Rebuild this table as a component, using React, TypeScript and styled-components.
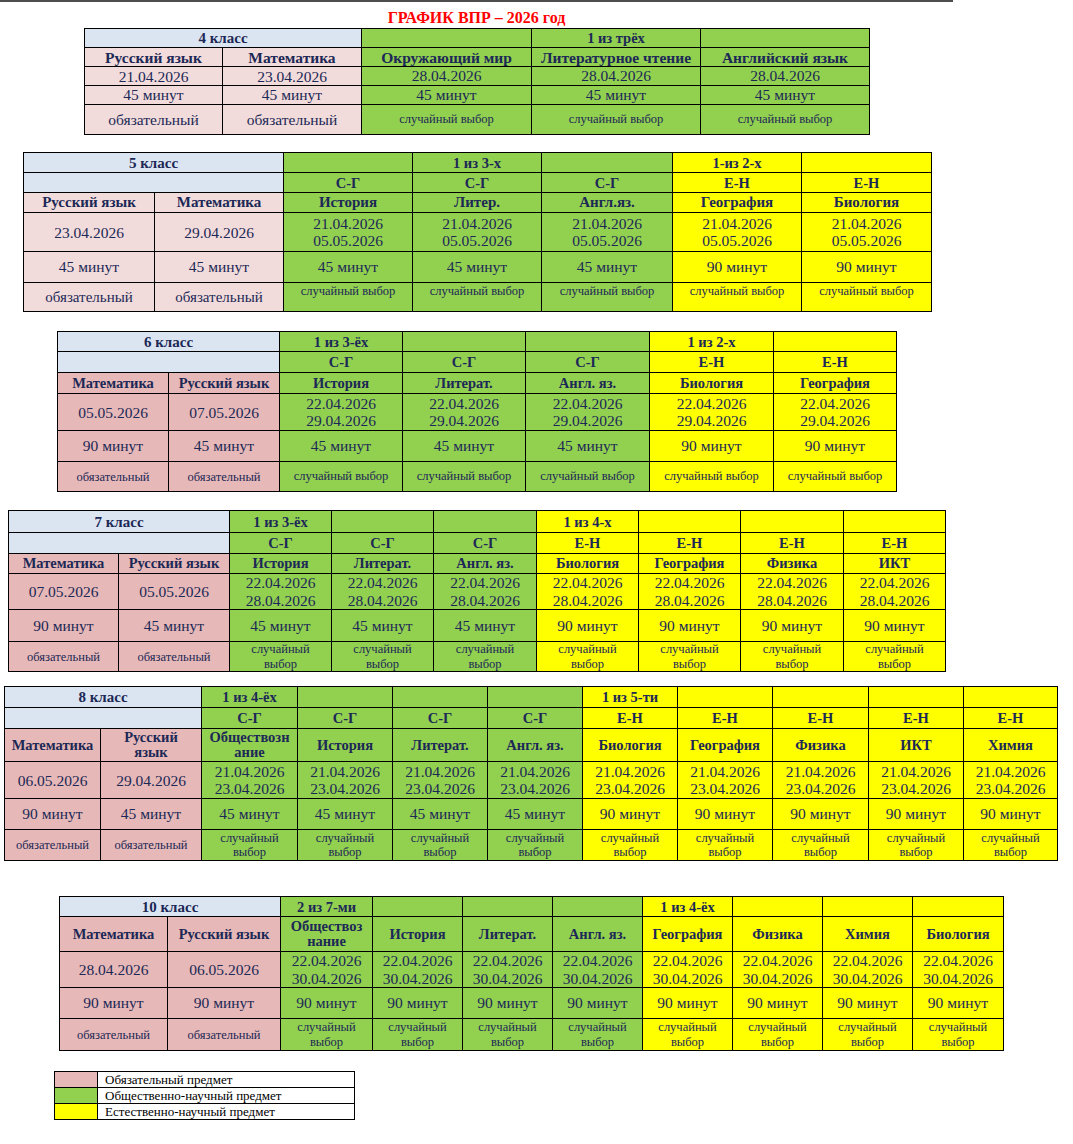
import React from "react";
import styled, { createGlobalStyle } from "styled-components";

const COLORS = {
  blue: "#dbe5f1",
  pinkLight: "#f2dcdb",
  pink: "#e6b8b7",
  green: "#92d050",
  yellow: "#ffff00",
};

type Tone = keyof typeof COLORS;
type Text = string | string[];

type Core = { name: Text; date: string; min: string };
type Elective = {
  group?: string;
  tag?: string;
  name: Text;
  dates: string[];
  min: string;
  tone: "green" | "yellow";
};
type Grade = {
  title: string;
  left: number;
  gap: number;
  cols: number[];
  rows: number[];
  pink: "pinkLight" | "pink";
  core: Core[];
  electives: Elective[];
  withTags: boolean;
  subj: number;
  opt: number;
  choiceTop?: boolean;
  choiceWrap?: boolean;
};

const GlobalStyle = createGlobalStyle`
  body {
    margin: 0;
    background: #fff;
    font-family: "Liberation Serif", "Times New Roman", serif;
  }
`;

const Page = styled.div`
  width: 1073px;
  display: flex;
  flex-direction: column;
  align-items: flex-start;
`;

const TopRule = styled.div`
  width: 953px;
  height: 2px;
  background: #4d4d4d;
`;

const Title = styled.h1`
  width: 953px;
  margin: 0;
  padding-top: 6px;
  height: 20px;
  line-height: 20px;
  text-align: center;
  color: #ff0000;
  font-size: 16px;
  font-weight: 700;
`;

const Sheet = styled.table<{ $left: number; $gap: number }>`
  margin-left: ${(p) => p.$left}px;
  margin-top: ${(p) => p.$gap}px;
  border-collapse: collapse;
  table-layout: fixed;
  color: #1c2856;
`;

const Col = styled.col<{ $w: number }>`
  width: ${(p) => p.$w}px;
`;

const Row = styled.tr<{ $h: number }>`
  height: ${(p) => p.$h}px;
`;

const Cell = styled.td<{
  $tone: Tone;
  $size: number;
  $bold?: boolean;
  $lh?: number;
  $top?: boolean;
}>`
  border: 1px solid #000;
  background: ${(p) => COLORS[p.$tone]};
  padding: ${(p) => (p.$top ? "1px 1px 0" : "0 1px")};
  text-align: center;
  vertical-align: ${(p) => (p.$top ? "top" : "middle")};
  font-size: ${(p) => p.$size}px;
  font-weight: ${(p) => (p.$bold ? 700 : 400)};
  line-height: ${(p) => p.$lh ?? 16}px;
  white-space: nowrap;
  overflow: hidden;
`;

const Legend = styled.table`
  margin: 20px 0 0 54px;
  border-collapse: collapse;
  table-layout: fixed;
  width: 301px;
`;

const Swatch = styled.td<{ $tone: Tone }>`
  width: 42px;
  height: 15px;
  padding: 0;
  border: 1px solid #000;
  background: ${(p) => COLORS[p.$tone]};
`;

const LegendText = styled.td`
  border: 1px solid #000;
  padding: 0 0 0 7px;
  font-size: 13px;
  line-height: 15px;
  color: #000;
`;

const lines = (t: Text) =>
  (Array.isArray(t) ? t : [t]).map((s, i) => (
    <React.Fragment key={i}>
      {i > 0 && <br />}
      {s}
    </React.Fragment>
  ));

const grades: Grade[] = [
  {
    title: "4 класс",
    left: 84,
    gap: 0,
    cols: [138, 139, 170, 169, 169],
    rows: [19, 19, 19, 19, 30],
    pink: "pinkLight",
    withTags: false,
    subj: 15.5,
    opt: 15.5,
    core: [
      { name: "Русский язык", date: "21.04.2026", min: "45 минут" },
      { name: "Математика", date: "23.04.2026", min: "45 минут" },
    ],
    electives: [
      { name: "Окружающий мир", dates: ["28.04.2026"], min: "45 минут", tone: "green" },
      { group: "1 из трёх", name: "Литературное чтение", dates: ["28.04.2026"], min: "45 минут", tone: "green" },
      { name: "Английский язык", dates: ["28.04.2026"], min: "45 минут", tone: "green" },
    ],
  },
  {
    title: "5 класс",
    left: 23,
    gap: 17,
    cols: [131, 129, 129, 129, 131, 129, 130],
    rows: [20, 20, 20, 39, 31, 29],
    pink: "pinkLight",
    withTags: true,
    subj: 15,
    opt: 15,
    choiceTop: true,
    core: [
      { name: "Русский язык", date: "23.04.2026", min: "45 минут" },
      { name: "Математика", date: "29.04.2026", min: "45 минут" },
    ],
    electives: [
      { tag: "С-Г", name: "История", dates: ["21.04.2026", "05.05.2026"], min: "45 минут", tone: "green" },
      { group: "1 из 3-х", tag: "С-Г", name: "Литер.", dates: ["21.04.2026", "05.05.2026"], min: "45 минут", tone: "green" },
      { tag: "С-Г", name: "Англ.яз.", dates: ["21.04.2026", "05.05.2026"], min: "45 минут", tone: "green" },
      { group: "1-из 2-х", tag: "Е-Н", name: "География", dates: ["21.04.2026", "05.05.2026"], min: "90 минут", tone: "yellow" },
      { tag: "Е-Н", name: "Биология", dates: ["21.04.2026", "05.05.2026"], min: "90 минут", tone: "yellow" },
    ],
  },
  {
    title: "6 класс",
    left: 57,
    gap: 19,
    cols: [111, 111, 123, 123, 124, 124, 123],
    rows: [20, 21, 21, 37, 31, 30],
    pink: "pink",
    withTags: true,
    subj: 14.5,
    opt: 12.5,
    core: [
      { name: "Математика", date: "05.05.2026", min: "90 минут" },
      { name: "Русский язык", date: "07.05.2026", min: "45 минут" },
    ],
    electives: [
      { group: "1 из 3-ёх", tag: "С-Г", name: "История", dates: ["22.04.2026", "29.04.2026"], min: "45 минут", tone: "green" },
      { tag: "С-Г", name: "Литерат.", dates: ["22.04.2026", "29.04.2026"], min: "45 минут", tone: "green" },
      { tag: "С-Г", name: "Англ. яз.", dates: ["22.04.2026", "29.04.2026"], min: "45 минут", tone: "green" },
      { group: "1 из 2-х", tag: "Е-Н", name: "Биология", dates: ["22.04.2026", "29.04.2026"], min: "90 минут", tone: "yellow" },
      { tag: "Е-Н", name: "География", dates: ["22.04.2026", "29.04.2026"], min: "90 минут", tone: "yellow" },
    ],
  },
  {
    title: "7 класс",
    left: 8,
    gap: 18,
    cols: [110, 111, 102, 102, 103, 102, 102, 103, 102],
    rows: [22, 21, 20, 36, 32, 30],
    pink: "pink",
    withTags: true,
    subj: 14.5,
    opt: 12.5,
    choiceWrap: true,
    core: [
      { name: "Математика", date: "07.05.2026", min: "90 минут" },
      { name: "Русский язык", date: "05.05.2026", min: "45 минут" },
    ],
    electives: [
      { group: "1 из 3-ёх", tag: "С-Г", name: "История", dates: ["22.04.2026", "28.04.2026"], min: "45 минут", tone: "green" },
      { tag: "С-Г", name: "Литерат.", dates: ["22.04.2026", "28.04.2026"], min: "45 минут", tone: "green" },
      { tag: "С-Г", name: "Англ. яз.", dates: ["22.04.2026", "28.04.2026"], min: "45 минут", tone: "green" },
      { group: "1 из 4-х", tag: "Е-Н", name: "Биология", dates: ["22.04.2026", "28.04.2026"], min: "90 минут", tone: "yellow" },
      { tag: "Е-Н", name: "География", dates: ["22.04.2026", "28.04.2026"], min: "90 минут", tone: "yellow" },
      { tag: "Е-Н", name: "Физика", dates: ["22.04.2026", "28.04.2026"], min: "90 минут", tone: "yellow" },
      { tag: "Е-Н", name: "ИКТ", dates: ["22.04.2026", "28.04.2026"], min: "90 минут", tone: "yellow" },
    ],
  },
  {
    title: "8 класс",
    left: 4,
    gap: 14,
    cols: [96, 101, 96, 95, 95, 95, 95, 95, 96, 95, 94],
    rows: [21, 21, 33, 37, 31, 31],
    pink: "pink",
    withTags: true,
    subj: 14.5,
    opt: 12.5,
    choiceWrap: true,
    core: [
      { name: "Математика", date: "06.05.2026", min: "90 минут" },
      { name: ["Русский", "язык"], date: "29.04.2026", min: "45 минут" },
    ],
    electives: [
      { group: "1 из 4-ёх", tag: "С-Г", name: ["Обществозн", "ание"], dates: ["21.04.2026", "23.04.2026"], min: "45 минут", tone: "green" },
      { tag: "С-Г", name: "История", dates: ["21.04.2026", "23.04.2026"], min: "45 минут", tone: "green" },
      { tag: "С-Г", name: "Литерат.", dates: ["21.04.2026", "23.04.2026"], min: "45 минут", tone: "green" },
      { tag: "С-Г", name: "Англ. яз.", dates: ["21.04.2026", "23.04.2026"], min: "45 минут", tone: "green" },
      { group: "1 из 5-ти", tag: "Е-Н", name: "Биология", dates: ["21.04.2026", "23.04.2026"], min: "90 минут", tone: "yellow" },
      { tag: "Е-Н", name: "География", dates: ["21.04.2026", "23.04.2026"], min: "90 минут", tone: "yellow" },
      { tag: "Е-Н", name: "Физика", dates: ["21.04.2026", "23.04.2026"], min: "90 минут", tone: "yellow" },
      { tag: "Е-Н", name: "ИКТ", dates: ["21.04.2026", "23.04.2026"], min: "90 минут", tone: "yellow" },
      { tag: "Е-Н", name: "Химия", dates: ["21.04.2026", "23.04.2026"], min: "90 минут", tone: "yellow" },
    ],
  },
  {
    title: "10 класс",
    left: 59,
    gap: 35,
    cols: [108, 113, 92, 90, 90, 90, 90, 90, 90, 91],
    rows: [20, 35, 36, 31, 32],
    pink: "pink",
    withTags: false,
    subj: 14.5,
    opt: 12.5,
    choiceWrap: true,
    core: [
      { name: "Математика", date: "28.04.2026", min: "90 минут" },
      { name: "Русский язык", date: "06.05.2026", min: "90 минут" },
    ],
    electives: [
      { group: "2 из 7-ми", name: ["Обществоз", "нание"], dates: ["22.04.2026", "30.04.2026"], min: "90 минут", tone: "green" },
      { name: "История", dates: ["22.04.2026", "30.04.2026"], min: "90 минут", tone: "green" },
      { name: "Литерат.", dates: ["22.04.2026", "30.04.2026"], min: "90 минут", tone: "green" },
      { name: "Англ. яз.", dates: ["22.04.2026", "30.04.2026"], min: "90 минут", tone: "green" },
      { group: "1 из 4-ёх", name: "География", dates: ["22.04.2026", "30.04.2026"], min: "90 минут", tone: "yellow" },
      { name: "Физика", dates: ["22.04.2026", "30.04.2026"], min: "90 минут", tone: "yellow" },
      { name: "Химия", dates: ["22.04.2026", "30.04.2026"], min: "90 минут", tone: "yellow" },
      { name: "Биология", dates: ["22.04.2026", "30.04.2026"], min: "90 минут", tone: "yellow" },
    ],
  },
];

function GradeTable({ g }: { g: Grade }) {
  const h = [...g.rows];
  const next = () => h.shift() ?? 20;
  const choice = g.choiceWrap ? ["случайный", "выбор"] : "случайный выбор";

  return (
    <Sheet $left={g.left} $gap={g.gap}>
      <colgroup>
        {g.cols.map((w, i) => (
          <Col key={i} $w={w} />
        ))}
      </colgroup>
      <tbody>
        <Row $h={next()}>
          <Cell $tone="blue" colSpan={2} $size={15} $bold>
            {g.title}
          </Cell>
          {g.electives.map((e, i) => (
            <Cell key={i} $tone={e.tone} $size={14.5} $bold>
              {e.group}
            </Cell>
          ))}
        </Row>
        {g.withTags && (
          <Row $h={next()}>
            <Cell $tone="blue" colSpan={2} $size={14} />
            {g.electives.map((e, i) => (
              <Cell key={i} $tone={e.tone} $size={14.5} $bold>
                {e.tag}
              </Cell>
            ))}
          </Row>
        )}
        <Row $h={next()}>
          {g.core.map((c, i) => (
            <Cell key={i} $tone={g.pink} $size={g.subj} $bold $lh={15}>
              {lines(c.name)}
            </Cell>
          ))}
          {g.electives.map((e, i) => (
            <Cell key={i} $tone={e.tone} $size={g.subj} $bold $lh={15}>
              {lines(e.name)}
            </Cell>
          ))}
        </Row>
        <Row $h={next()}>
          {g.core.map((c, i) => (
            <Cell key={i} $tone={g.pink} $size={15.5} $lh={17}>
              {c.date}
            </Cell>
          ))}
          {g.electives.map((e, i) => (
            <Cell key={i} $tone={e.tone} $size={15.5} $lh={17.5}>
              {lines(e.dates)}
            </Cell>
          ))}
        </Row>
        <Row $h={next()}>
          {g.core.map((c, i) => (
            <Cell key={i} $tone={g.pink} $size={15.5}>
              {c.min}
            </Cell>
          ))}
          {g.electives.map((e, i) => (
            <Cell key={i} $tone={e.tone} $size={15.5}>
              {e.min}
            </Cell>
          ))}
        </Row>
        <Row $h={next()}>
          {g.core.map((_, i) => (
            <Cell key={i} $tone={g.pink} $size={g.opt}>
              обязательный
            </Cell>
          ))}
          {g.electives.map((e, i) => (
            <Cell key={i} $tone={e.tone} $size={12.5} $lh={14.5} $top={g.choiceTop}>
              {lines(choice)}
            </Cell>
          ))}
        </Row>
      </tbody>
    </Sheet>
  );
}

const legend: { tone: Tone; label: string }[] = [
  { tone: "pink", label: "Обязательный предмет" },
  { tone: "green", label: "Общественно-научный предмет" },
  { tone: "yellow", label: "Естественно-научный предмет" },
];

export default function App() {
  return (
    <>
      <GlobalStyle />
      <Page>
        <TopRule />
        <Title>ГРАФИК ВПР – 2026 год</Title>
        {grades.map((g) => (
          <GradeTable key={g.title} g={g} />
        ))}
        <Legend>
          <tbody>
            {legend.map((l) => (
              <tr key={l.label}>
                <Swatch $tone={l.tone} />
                <LegendText>{l.label}</LegendText>
              </tr>
            ))}
          </tbody>
        </Legend>
      </Page>
    </>
  );
}
